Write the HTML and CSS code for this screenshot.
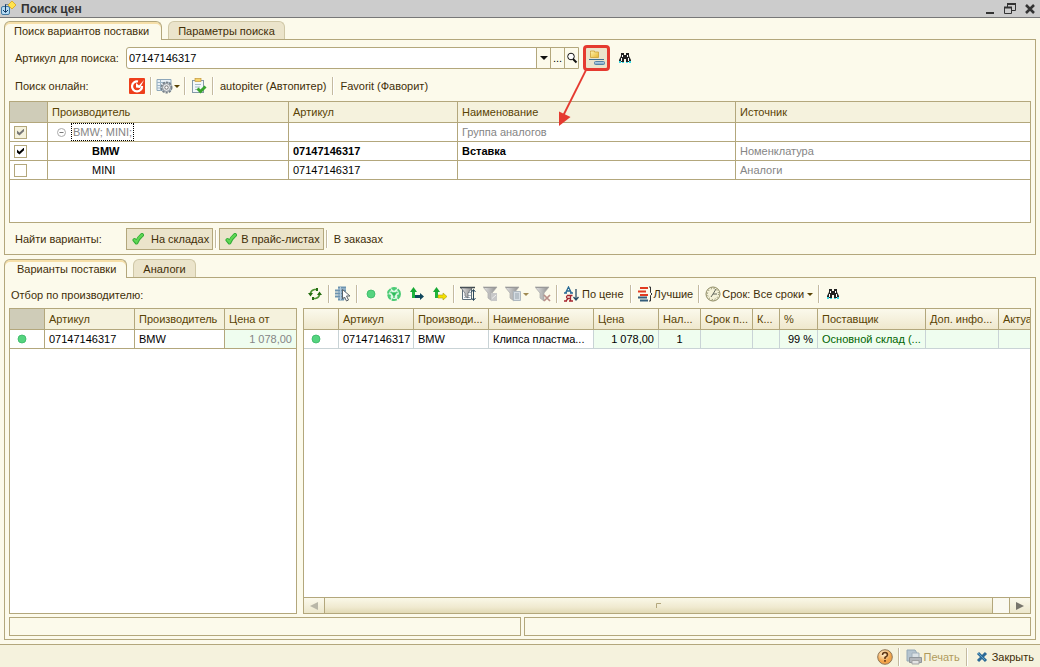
FILE: index.html
```html
<!DOCTYPE html>
<html lang="ru">
<head>
<meta charset="utf-8">
<title>Поиск цен</title>
<link rel="stylesheet" href="styles.css">
</head>
<body>
<svg class="defs" aria-hidden="true">
  <defs>
    <linearGradient id="gGray" x1="0" x2="1"><stop offset="0" stop-color="#e6e6e6"/><stop offset="1" stop-color="#8c8c8c"/></linearGradient>
    <linearGradient id="gFolder" x1="0" y1="0" x2="1" y2="1"><stop offset="0" stop-color="#fff3b0"/><stop offset="1" stop-color="#e8b730"/></linearGradient>
    <linearGradient id="gBlue" x1="0" y1="0" x2="0" y2="1"><stop offset="0" stop-color="#c5dcec"/><stop offset="1" stop-color="#6f9dc0"/></linearGradient>
    <radialGradient id="gHelp" cx=".4" cy=".3"><stop offset="0" stop-color="#fff3d8"/><stop offset="1" stop-color="#f2a44a"/></radialGradient>
  </defs>
  <symbol id="binoculars" viewBox="0 0 12 10"><path fill="#222" d="M2 0h3v2h2V0h3v3l2 4v2H7V6H5v3H0V7l2-4z"/><path fill="#fff" d="M3 2h1v2H3zM8 2h1v2H8zM2 5h1v3H2zM9 5h1v3H9z"/><path fill="#38d7e2" d="M0 8h2v2H0zM3 9h2v1H3zM7 9h2v1H7zM10 8h2v2h-2z"/></symbol>
  <symbol id="tick" viewBox="0 0 12 12"><path d="M2.500 7 4.500 9.500Q6.500 5 10 2" fill="none" stroke="#2fab35" stroke-width="4" stroke-linejoin="round" stroke-linecap="round"/><path d="M2.500 7 4.500 9Q6.500 4.500 10 2" fill="none" stroke="#5fd654" stroke-width="2.200" stroke-linecap="round"/></symbol>
  <symbol id="funnel" viewBox="0 0 16 16"><path d="M0 1h14L9 7v8l-4-3V7z" fill="url(#gGray)" stroke="#a6a6a6" stroke-width=".7"/><path d="M1 1.500h12" stroke="#999"/></symbol>
  <symbol id="dot" viewBox="0 0 10 10"><circle cx="5" cy="5" r="4" fill="#55d47f" stroke="#38b866" stroke-width=".8"/></symbol>
</svg>

<header class="titlebar">
  <svg class="app-icon" width="16" height="16" viewBox="0 0 16 16"><rect x="1.500" y="5.500" width="8" height="8" rx="1.500" fill="#b5dbf3" stroke="#427aa3"/><path d="M5.500 3.500V11M3 9l2.500 2.500L8 9" stroke="#143a63" fill="none"/><path d="M5.500 3.500H9" stroke="#143a63" stroke-dasharray="1 1"/><path d="m12 0 4 4-4 4-4-4z" fill="#ffe34d" stroke="#d7a21d" stroke-width=".8"/></svg>
  <h1>Поиск цен</h1>
  <div class="window-buttons">
    <button aria-label="Свернуть"><svg width="12" height="12" viewBox="0 0 12 12"><path d="M2 9h8v2H2z" fill="#333"/></svg></button>
    <button aria-label="Восстановить"><svg width="12" height="12" viewBox="0 0 12 12"><path d="M3.500 4V1h8v6.500H8" stroke="#333" fill="none"/><path d="M3 1h9" stroke="#333" stroke-width="2"/><path d="M.5 4.500h7v6h-7z" stroke="#333" fill="none"/><path d="M0 4.500h8" stroke="#333" stroke-width="2"/></svg></button>
    <button aria-label="Закрыть окно"><svg width="12" height="12" viewBox="0 0 12 12"><path d="m2 2 8 8m0-8-8 8" stroke="#333" stroke-width="2.500"/></svg></button>
  </div>
</header>

<main class="workspace">
  <section class="group">
    <div class="tabs" role="tablist">
      <button class="tab active" role="tab" aria-selected="true">Поиск вариантов поставки</button>
      <button class="tab" role="tab" aria-selected="false">Параметры поиска</button>
    </div>
    <div class="panel search-panel">
      <div class="form-row">
        <label class="caption" for="article">Артикул для поиска:</label>
        <div class="combo">
          <input id="article" type="text" value="07147146317">
          <button aria-label="Открыть список"><span class="arrow"></span></button>
          <button aria-label="Выбрать">...</button>
          <button aria-label="Найти"><svg width="12" height="12" viewBox="0 0 12 12"><circle cx="5" cy="4.500" r="3.300" fill="#fff" stroke="#111"/><path d="m7 7 3.500 3.500" stroke="#111" stroke-width="2"/></svg></button>
        </div>
        <div class="marked">
          <button class="marked-button" aria-label="Группировать аналоги"><svg width="18" height="16" viewBox="0 0 18 16"><path d="M2.500 2.500V1h4v1h4v5.500h-8z" fill="url(#gFolder)" stroke="#cda136" stroke-width=".8"/><path d="M1 9.500h15" stroke="#3f6f91"/><rect x="6.500" y="11.500" width="10" height="3" rx="1" fill="url(#gBlue)" stroke="#5482a5"/></svg></button>
          <svg class="pointer" width="32" height="60" viewBox="0 0 32 60"><path d="M28 0 5 46" stroke="#e53a30" stroke-width="1.800"/><path d="M1 41.500 12.500 47 1 56z" fill="#e53a30"/></svg>
        </div>
        <button class="tool" aria-label="Поиск"><svg width="12" height="10"><use href="#binoculars"/></svg></button>
      </div>

      <div class="form-row online-row">
        <span class="caption">Поиск онлайн:</span>
        <div class="toolbar">
          <button class="tool" aria-label="Искать онлайн"><svg width="16" height="16" viewBox="0 0 16 16"><rect width="16" height="16" rx="1" fill="#ee3e1b"/><path d="M9 3.500A5 5 0 1 0 13 8" stroke="#fff" stroke-width="2.200" fill="none"/><path d="M7 9.500V5l3 2.500L15 2l-4 8z" fill="#fff"/></svg></button>
          <span class="sep"></span>
          <button class="tool wide" aria-label="Настройки"><svg width="17" height="16" viewBox="0 0 17 16"><path d="M1 1.500h14v11H1z" fill="#eaf1f6" stroke="#8da7ba"/><path d="M1 4.500h14M4.500 2v11M1 7.500h6M1 10h6" stroke="#9db5c6"/><circle cx="10.500" cy="9.500" r="5" fill="#eee" stroke="#77818a" stroke-width="2" stroke-dasharray="2.200 1"/><circle cx="10.500" cy="9.500" r="4" fill="#e5e7e9" stroke="#8a939a"/><circle cx="10.500" cy="9.500" r="1.700" fill="#fff" stroke="#777"/></svg><span class="arrow small"></span></button>
          <span class="sep"></span>
          <button class="tool" aria-label="Проверить"><svg width="16" height="16" viewBox="0 0 16 16"><rect x="1.500" y="2.500" width="11" height="12" fill="#f2f7fa" stroke="#8599a8"/><rect x="4" y=".5" width="6" height="3" fill="#f6d36c" stroke="#c4983b" stroke-width=".7"/><path d="M4 6.500h6M4 9h5M4 11.500h3" stroke="#a5bac8"/><path d="m6.500 10.500 3 3 5-5" fill="none" stroke="#38a42d" stroke-width="3"/></svg></button>
          <span class="sep"></span>
          <button class="tool text">autopiter (Автопитер)</button>
          <span class="sep"></span>
          <button class="tool text">Favorit (Фаворит)</button>
        </div>
      </div>

      <div class="grid-box makers-box">
        <table class="grid makers">
          <colgroup><col class="w38"><col class="w241"><col class="w169"><col class="w278"><col></colgroup>
          <thead><tr><th class="corner"></th><th>Производитель</th><th>Артикул</th><th>Наименование</th><th>Источник</th></tr></thead>
          <tbody>
            <tr class="muted"><td><input type="checkbox" class="mixed" checked aria-label="BMW; MINI;"></td><td><div class="tree"><svg width="9" height="9" viewBox="0 0 9 9"><circle cx="4.500" cy="4.500" r="4" fill="#fff" stroke="#aaa"/><path d="M2.500 4.500h4" stroke="#777"/></svg><span class="focus">BMW; MINI;</span></div></td><td></td><td>Группа аналогов</td><td></td></tr>
            <tr class="strong"><td><input type="checkbox" checked aria-label="BMW"></td><td class="child">BMW</td><td>07147146317</td><td>Вставка</td><td class="source">Номенклатура</td></tr>
            <tr><td><input type="checkbox" aria-label="MINI"></td><td class="child">MINI</td><td>07147146317</td><td></td><td class="source">Аналоги</td></tr>
          </tbody>
        </table>
      </div>

      <div class="form-row find-row">
        <span class="caption">Найти варианты:</span>
        <div class="toolbar">
          <button class="toggle" aria-pressed="true"><svg width="12" height="12"><use href="#tick"/></svg><span class="first-label">На складах</span></button>
          <span class="sep"></span>
          <button class="toggle" aria-pressed="true"><svg width="12" height="12"><use href="#tick"/></svg>В прайс-листах</button>
          <span class="sep"></span>
          <button class="tool text">В заказах</button>
        </div>
      </div>
    </div>
  </section>

  <section class="group results">
    <div class="tabs" role="tablist">
      <button class="tab active roomy" role="tab" aria-selected="true">Варианты поставки</button>
      <button class="tab" role="tab" aria-selected="false">Аналоги</button>
    </div>
    <div class="panel results-panel">
      <div class="columns">
        <div class="column left">
          <div class="column-head">Отбор по производителю:</div>
          <div class="grid-box fill">
            <table class="grid filter">
              <colgroup><col class="w35"><col class="w90"><col class="w90"><col></colgroup>
              <thead><tr><th class="corner"></th><th>Артикул</th><th>Производитель</th><th>Цена от</th></tr></thead>
              <tbody><tr><td class="status"><svg width="10" height="10"><use href="#dot"/></svg></td><td>07147146317</td><td>BMW</td><td class="num green source">1 078,00</td></tr></tbody>
            </table>
          </div>
        </div>

        <div class="column right">
          <div class="column-head toolbar">
            <button class="tool" aria-label="Обновить"><svg width="14" height="12" viewBox="0 0 14 12"><path d="M2.500 6.500V5q1-3 4-3.500h1.500M11.500 5.500V7q-1 3-4 3.500H6" fill="none" stroke="#4d9433" stroke-width="1.700"/><path d="M0 5h5L2.500 8.500zM9 7h5l-2.500-3.500z" fill="#256d12"/><path d="M8 0h2v3H8zM4 9h2v3H4z" fill="#256d12"/></svg></button>
            <span class="sep"></span>
            <button class="tool" aria-label="Выбрать строку"><svg width="16" height="16" viewBox="0 0 16 16"><path d="M3 1.500h8v12H3z" fill="#b4cbdc"/><path d="M3 1.500h8M0 4.500h11M0 7.500h9M0 10.500h9M3 13.500h6" stroke="#6c93af" stroke-width="2"/><path d="M5.500 1v13" stroke="#b4cbdc"/><path d="M7.500 3.500V13l2-2 2 4 2-1-2-4H15z" fill="#fff" stroke="#5b6268"/></svg></button>
            <span class="sep"></span>
            <button class="tool" aria-label="В наличии"><svg width="10" height="10"><use href="#dot"/></svg></button>
            <button class="tool" aria-label="Сеть"><svg width="14" height="14" viewBox="0 0 14 14"><circle cx="7" cy="7" r="6" fill="#dff8e6" stroke="#4ccb76" stroke-width="2" stroke-dasharray="5.280 1"/><path d="M7 7v4M7 7 3.500 5M7 7l3.500-2" stroke="#4ccb76" stroke-width="1.500"/><circle cx="7" cy="7" r="1.800" fill="#2dbb5b"/><path d="M4 1h6L7 4zM1 7l3 1-1 4zM13 7l-3 1 1 4z" fill="#4ccb76"/></svg></button>
            <button class="tool" aria-label="Перейти"><svg width="14" height="14" viewBox="0 0 14 14"><path d="M3.500 4v5.500H6" stroke="#1fb43e" stroke-width="3" fill="none"/><path d="M0 5 3.500 0 7 5z" fill="#16a934"/><path d="M5 8h5V6l4 3.500-4 3.500v-2H5z" fill="#10465c"/></svg></button>
            <button class="tool" aria-label="Перейти к замене"><svg width="14" height="14" viewBox="0 0 14 14"><path d="M3.500 4v5.500H6" stroke="#1fb43e" stroke-width="3" fill="none"/><path d="M0 5 3.500 0 7 5z" fill="#16a934"/><path d="M5 8h5V6l4 3.500-4 3.500v-2H5z" fill="#f4df00" stroke="#a89d12" stroke-width=".6"/></svg></button>
            <span class="sep"></span>
            <button class="tool" aria-label="Отбор и сортировка"><svg width="16" height="16" viewBox="0 0 16 16"><path d="M2.500 2.500h9v11h-9z" fill="#f8fafb" stroke="#5c6e79"/><path d="M8 6.500h3M8 9.500h3M4 11.500h6" stroke="#a6b4bd"/><path d="M0 1.500h15" stroke="#3f484e" stroke-width="1.500"/><path d="M1 2h11L8 7v5l-3-2V7z" fill="url(#gGray)" stroke="#5b6369" stroke-width=".7"/><path d="M13.500 4v10M11.500 12l2 2.500 2-2.500M11.500 6l2-2.500 2 2.500" stroke="#29475c" fill="none"/></svg></button>
            <button class="tool" aria-label="Отбор по значению" disabled><svg width="16" height="16"><use href="#funnel"/><path d="M8 7h6v8H8z" fill="#c8c8c8"/><path d="M9 12.500 13 9" stroke="#eee"/></svg></button>
            <button class="tool wide" aria-label="История отборов" disabled><svg width="17" height="16"><use href="#funnel" width="16" height="16"/><path d="M8.500 5.500h7v9h-7z" fill="#d5dce2" stroke="#aeb8c0"/><path d="M10 8h4M10 10h4M10 12h4" stroke="#99a5ae"/></svg><span class="arrow small dim"></span></button>
            <button class="tool" aria-label="Отключить отбор" disabled><svg width="16" height="16"><use href="#funnel"/><path d="m9 9 6 6m0-6-6 6" stroke="#b98e88" stroke-width="1.700"/></svg></button>
            <span class="sep"></span>
            <button class="tool text"><svg width="16" height="16" viewBox="0 0 16 16"><path d="m1.500 7 3-6 3 6M3 5h4M0 7h3M6 7h3" fill="none" stroke="#276a96" stroke-width="1.300"/><path d="M6.500 9v6M8.500 9.500h-5q-2 1.500 0 3h3M4 12.500 2 15M0 15h3M5 15h4" fill="none" stroke="#a52630" stroke-width="1.300"/><path d="M12 3v11M9.500 11l2.500 3 2.500-3" stroke="#274b66" stroke-width="1.300" fill="none"/></svg>По цене</button>
            <span class="sep"></span>
            <button class="tool text snug"><svg width="16" height="16" viewBox="0 0 16 16"><path d="M3 2h8M1 5.500h8M3 9h8" stroke="#e13a20" stroke-width="2"/><path d="M1 11.500h9M3 14.500h8" stroke="#345d7a" stroke-width="2"/><path d="M12 1h1.500v5.500L15 8l-1.500 1.500V15H12" fill="none" stroke="#333"/></svg>Лучшие</button>
            <span class="sep"></span>
            <button class="tool text snug"><svg width="16" height="16" viewBox="0 0 16 16"><circle cx="8" cy="8" r="7" fill="#f5f2d7" stroke="#89865e"/><circle cx="8" cy="8" r="5.500" fill="none" stroke="#77775b" stroke-width="1" stroke-dasharray="1 1.880"/><path d="m11 3-3 5-2 3M8 8h4" stroke="#60645a" fill="none"/></svg>Срок: Все сроки<span class="arrow small"></span></button>
            <span class="sep"></span>
            <button class="tool" aria-label="Найти в таблице"><svg width="12" height="10"><use href="#binoculars"/></svg></button>
          </div>
          <div class="grid-box fill offers-box">
            <div class="clip">
            <table class="grid offers">
              <colgroup><col class="w35"><col class="w75"><col class="w75"><col class="w105"><col class="w65"><col class="w42"><col class="w52"><col class="w27"><col class="w38"><col class="w108"><col class="w73"><col></colgroup>
              <thead><tr><th></th><th>Артикул</th><th>Производи...</th><th>Наименование</th><th>Цена</th><th>Нал...</th><th>Срок п...</th><th>К...</th><th>%</th><th>Поставщик</th><th>Доп. инфо...</th><th class="last">Актуа</th></tr></thead>
              <tbody><tr><td class="status"><svg width="10" height="10"><use href="#dot"/></svg></td><td>07147146317</td><td>BMW</td><td>Клипса пластма...</td><td class="num green">1 078,00</td><td class="green mid">1</td><td class="green"></td><td class="green"></td><td class="num green">99 %</td><td class="green supplier">Основной склад (...</td><td class="green"></td><td class="green"></td></tr></tbody>
            </table>
            </div>
            <div class="scrollbar">
              <button aria-label="Прокрутить влево"><svg width="8" height="8" viewBox="0 0 8 8"><path d="M8 0v8L0 4z" fill="#b9b7a8"/></svg></button>
              <div class="thumb"><svg width="5" height="5" viewBox="0 0 5 5"><path d="M.5 5V.5H5" stroke="#b3a77c" fill="none"/></svg></div>
              <div class="track"></div>
              <button aria-label="Прокрутить вправо"><svg width="8" height="8" viewBox="0 0 8 8"><path d="M0 0v8l8-4z" fill="#77756c"/></svg></button>
            </div>
          </div>
        </div>
      </div>
      <div class="status-row"><div></div><div></div></div>
    </div>
  </section>
</main>

<footer class="footer">
  <button class="tool" aria-label="Справка"><svg width="16" height="16" viewBox="0 0 16 16"><circle cx="8" cy="8" r="7.300" fill="url(#gHelp)" stroke="#8e7657"/><path d="M5.500 6q0-2.500 2.500-2.500T10.500 6Q10.500 7 8 8.500V10" fill="none" stroke="#5d3514" stroke-width="1.500"/><path d="M7.200 11h1.600v1.700H7.200z" fill="#5d3514"/></svg></button>
  <span class="sep"></span>
  <button class="tool text" disabled><svg width="16" height="16" viewBox="0 0 16 16"><path d="M1 1h8l2 3v8H1z" fill="#b5c4cf" stroke="#94a8b6"/><path d="M6 4h7v5H6z" fill="#dbe2e6" stroke="#a3b1bb"/><path d="M3.500 8.500h12v5h-12z" fill="#b3b6ba" stroke="#8f959a"/><path d="M6 11.500h7v3.500H6z" fill="#e4e4e4" stroke="#a3a3a3"/></svg>Печать</button>
  <span class="sep"></span>
  <button class="tool text close"><svg width="12" height="12" viewBox="0 0 12 12"><path d="m2 2 8 8m0-8-8 8" stroke="#2c6a96" stroke-width="3"/><path d="m2 2 7 7" stroke="#5a9fc8" stroke-width="1"/></svg>Закрыть</button>
</footer>
</body>
</html>
```

FILE: styles.css
```css
:root {
  --line: #b3a77c;
  --bg: #fcfaeb;
  --head: #f5f2dd;
  --tab: #ebe4cb;
  --text: #3f2e08;
  --brown: #594304;
}

* { box-sizing: border-box; }

body {
  margin: 0;
  min-height: 100vh;
  display: flex;
  flex-direction: column;
  background: var(--bg);
  color: var(--text);
  font: 11px/14px "Liberation Sans", Arial, sans-serif;
}

button, input { font: inherit; color: inherit; }
button { border: 0; padding: 0; background: none; white-space: nowrap; }
svg { flex: none; }
.defs { position: absolute; width: 0; height: 0; }

.titlebar {
  display: flex;
  align-items: center;
  gap: 5px;
  height: 18px;
  padding-right: 4px;
  background: #ccc;
  border-bottom: 1px solid #777;
}
.titlebar h1 { flex: 1; margin: 0; font-size: 12px; line-height: 16px; color: #333; }
.window-buttons { display: flex; gap: 8px; }
.window-buttons button { display: flex; }

.workspace { flex: 1; display: flex; flex-direction: column; gap: 4px; padding: 3px 4px 4px; }
.group { display: flex; flex-direction: column; }
.results { flex: 1; }

.tabs { display: flex; gap: 6px; }
.tab {
  height: 18px;
  padding: 0 9px;
  background: var(--tab);
  border: 1px solid #cfc7a6;
  border-bottom: 0;
  border-radius: 6px 6px 0 0;
}
.tab.active {
  position: relative;
  z-index: 1;
  height: 19px;
  margin-bottom: -1px;
  padding-right: 12px;
  background: var(--bg);
  border-color: var(--line);
  box-shadow: inset 0 2px 0 #f6dfa8;
}
.tab.roomy { padding: 0 10px 0 12px; }

.panel { border: 1px solid var(--line); padding: 0 4px; }

.form-row { display: flex; align-items: center; padding: 0 6px; }
.caption { width: 111px; flex: none; white-space: nowrap; }
.search-panel { display: flex; flex-direction: column; padding-bottom: 4px; }
.search-panel > .form-row:first-child { padding-top: 5px; }

.combo {
  display: flex;
  width: 453px;
  height: 22px;
  background: #fff;
  border: 1px solid var(--line);
  border-radius: 3px 0 0 3px;
}
.combo input { flex: 1; min-width: 0; border: 0; padding: 0 2px; background: none; color: #000; outline: 0; }
.combo button {
  display: flex;
  align-items: center;
  justify-content: center;
  width: 14px;
  background: var(--bg);
  border-left: 1px solid var(--line);
  color: #000;
}
.arrow { border: 4px solid transparent; border-top-color: #111; border-bottom: 0; }
.arrow.small { border-width: 3px; border-bottom: 0; border-top-color: var(--brown); }
.arrow.dim { border-top-color: #a08a52; }

.marked { position: relative; margin: 0 4px; }
.marked-button {
  display: flex;
  align-items: center;
  justify-content: center;
  width: 27px;
  height: 26px;
  background: var(--tab);
  border: 3px solid #e53a30;
  border-radius: 4px;
}
.pointer { position: absolute; left: -25px; top: 25px; z-index: 2; pointer-events: none; }

.toolbar { display: flex; align-items: center; gap: 1px; }
.tool { display: flex; align-items: center; justify-content: center; width: 22px; height: 22px; flex: none; }
.tool.wide { width: 28px; gap: 1px; }
.tool.text { width: auto; padding: 0 4px; gap: 2px; }
.tool.snug { padding: 0 3px; gap: 1px; }
.snug .arrow { margin-left: 2px; }
.sep {
  width: 2px;
  height: 18px;
  margin: 0 1px;
  flex: none;
  background: linear-gradient(90deg, #c4baa0 50%, #fff 50%);
}

.online-row { height: 26px; margin: 2px 0; }
.find-row { padding-top: 5px; }
.toggle {
  display: flex;
  align-items: center;
  gap: 4px;
  height: 22px;
  padding: 0 3px 0 5px;
  background: var(--tab);
  border: 1px solid var(--line);
}
.first-label { margin-left: 3px; }

.grid-box { border: 1px solid var(--line); background: #fff; overflow: hidden; }
.makers-box { height: 122px; }
.grid { width: 100%; table-layout: fixed; border-collapse: separate; border-spacing: 0; }
.grid th, .grid td {
  padding: 0 4px;
  border-right: 1px solid var(--line);
  border-bottom: 1px solid var(--line);
  text-align: left;
  white-space: nowrap;
  overflow: hidden;
}
.grid th:last-child, .grid td:last-child { border-right: 0; }
.grid th { height: 21px; background: var(--head); color: var(--brown); font-weight: normal; }
.grid td { height: 19px; color: #000; }
.grid th.corner { background: #cfccb8; }
.grid .muted td, .grid td.source { color: #858585; font-weight: normal; }
.grid .strong td { font-weight: bold; }
.grid .strong td.source { font-weight: normal; }
.grid td.child { padding-left: 44px; }
.grid td.status svg { display: block; margin-left: 3px; }
.grid td.num { text-align: right; }
.grid td.mid { text-align: center; }
.grid td.green { background: #effdef; }
.grid td.supplier { color: #006400; }
.grid th.last { padding-right: 0; }

.tree { display: flex; align-items: center; gap: 5px; padding-left: 5px; }
.focus { padding: 1px; border: 1px dotted #000; }

input[type="checkbox"] {
  appearance: none;
  display: block;
  width: 13px;
  height: 13px;
  margin: 0;
  background: #fff;
  border: 1px solid var(--line);
}
input[type="checkbox"]:checked::after {
  content: "";
  display: block;
  width: 7px;
  height: 7px;
  margin: 2px;
  background: #000;
  clip-path: polygon(0 30%, 35% 62%, 100% 0, 100% 38%, 35% 100%, 0 70%);
}
input[type="checkbox"].mixed { background: var(--head); }
input[type="checkbox"].mixed:checked::after { background: #777; }

.w27 { width: 27px; }
.w35 { width: 35px; }
.w38 { width: 38px; }
.w42 { width: 42px; }
.w52 { width: 52px; }
.w65 { width: 65px; }
.w73 { width: 73px; }
.w75 { width: 75px; }
.w90 { width: 90px; }
.w105 { width: 105px; }
.w108 { width: 108px; }
.w169 { width: 169px; }
.w241 { width: 241px; }
.w278 { width: 278px; }

.results-panel { flex: 1; display: flex; flex-direction: column; padding-bottom: 3px; }
.columns { flex: 1; display: flex; gap: 6px; }
.column { display: flex; flex-direction: column; }
.left { width: 288px; flex: none; }
.right { flex: 1; min-width: 0; }
.column-head { height: 30px; padding: 2px 0 0 2px; line-height: 30px; }
.column-head.toolbar { padding: 2px 0 0 1px; line-height: 14px; }
.fill { flex: 1; }

.offers-box { display: flex; flex-direction: column; }
.clip { flex: 1; overflow: hidden; }
.offers th { background: linear-gradient(#fbf9ec, #efe8cd); }
.offers td { border-color: #c9d3d6; }

.scrollbar { display: flex; height: 16px; border-top: 1px solid var(--line); background: #faf9f0; }
.scrollbar button, .thumb {
  display: flex;
  align-items: center;
  justify-content: center;
  background: linear-gradient(#fbf9ec, #ece7cc);
}
.scrollbar button { width: 20px; }
.thumb { flex: 1; border: solid var(--line); border-width: 0 1px; background: linear-gradient(#faf8e8, #f0ead0 60%, #e2dab5); }
.track { width: 17px; border-right: 1px solid var(--line); }

.status-row { display: grid; grid-template-columns: 513fr 507fr; gap: 3px; margin-top: 3px; }
.status-row div { height: 19px; border: 1px solid var(--line); }

.footer {
  display: flex;
  align-items: center;
  justify-content: flex-end;
  gap: 1px;
  height: 23px;
  padding: 2px 2px 0 0;
  background: var(--head);
  border-top: 1px solid var(--line);
}
.footer .tool:disabled { color: #b09a5c; }
.footer .close { gap: 4px; padding-left: 6px; }
```
